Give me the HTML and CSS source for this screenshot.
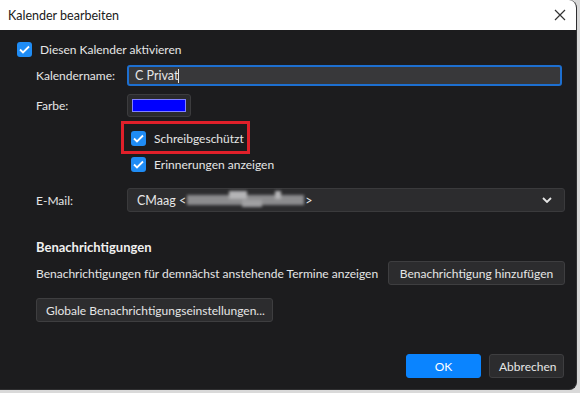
FILE: index.html
```html
<!DOCTYPE html>
<html lang="de">
<head>
  <meta charset="UTF-8">
  <title>Kalender bearbeiten</title>
  <link rel="stylesheet" href="styles.css">
</head>
<body>
  <div class="window">
    <div class="titlebar">
      <span class="title">Kalender bearbeiten</span>
      <svg class="close" width="12" height="12" viewBox="0 0 12 12">
        <path d="M1 1 L11 11 M11 1 L1 11" stroke="#333" stroke-width="1.2" fill="none"/>
      </svg>
    </div>

    <div class="content">
      <label class="check main-check">
        <span class="box"><svg width="11" height="9" viewBox="0 0 11 9"><path d="M1 4.5 L4 7.5 L10 1.5" stroke="#fff" stroke-width="1.8" fill="none"/></svg></span>
        Diesen Kalender aktivieren
      </label>

      <div class="form-row row-name">
        <span class="label">Kalendername:</span>
        <div class="text-input">C Privat<span class="caret"></span></div>
      </div>

      <div class="form-row row-color">
        <span class="label">Farbe:</span>
        <div class="color-btn"><span class="swatch"></span></div>
      </div>

      <div class="checks">
        <div class="highlight">
          <label class="check">
            <span class="box"><svg width="11" height="9" viewBox="0 0 11 9"><path d="M1 4.5 L4 7.5 L10 1.5" stroke="#fff" stroke-width="1.8" fill="none"/></svg></span>
            Schreibgeschützt
          </label>
        </div>
        <label class="check reminder">
          <span class="box"><svg width="11" height="9" viewBox="0 0 11 9"><path d="M1 4.5 L4 7.5 L10 1.5" stroke="#fff" stroke-width="1.8" fill="none"/></svg></span>
          Erinnerungen anzeigen
        </label>
      </div>

      <div class="form-row row-mail">
        <span class="label">E-Mail:</span>
        <div class="select">
          <span class="mail">CMaag &lt;<span class="blur"><i class="b1"></i><i class="b2"></i><i class="b3"></i></span>&gt;</span>
          <svg class="chevron" width="10" height="6" viewBox="0 0 10 6"><path d="M1 1 L5 5 L9 1" stroke="#e6e6e6" stroke-width="1.8" fill="none"/></svg>
        </div>
      </div>

      <h3 class="section">Benachrichtigungen</h3>
      <div class="notify-row">
        <span>Benachrichtigungen für demnächst anstehende Termine anzeigen</span>
        <button class="btn add">Benachrichtigung hinzufügen</button>
      </div>
      <button class="btn global">Globale Benachrichtigungseinstellungen...</button>

      <div class="footer">
        <button class="btn primary">OK</button>
        <button class="btn">Abbrechen</button>
      </div>
    </div>
  </div>
</body>
</html>
```

FILE: styles.css
```css
html, body {
  margin: 0;
  padding: 0;
}
body {
  width: 580px;
  height: 393px;
  background: #d9d9d9;
  font-family: Lato, "Noto Sans", sans-serif;
  font-size: 12px;
  color: #e6e6e6;
  overflow: hidden;
  white-space: nowrap;
}
.window {
  width: 577px;
  height: 390px;
  background: #1c1c1e;
  border-right: 1px solid #2e2e30;
  border-bottom: 1px solid #2e2e30;
  border-radius: 0 8px 8px 0;
  overflow: hidden;
  box-sizing: border-box;
}
.titlebar {
  height: 30px;
  background: #fff;
  color: #1a1a1a;
  display: flex;
  align-items: center;
  justify-content: space-between;
  padding: 0 10px 0 8px;
  font-size: 12.5px;
}
.content {
  padding: 11px 0 0 0;
}
.check {
  display: flex;
  align-items: center;
  gap: 8px;
  height: 16px;
}
.box {
  width: 15px;
  height: 15px;
  border-radius: 3px;
  background: #1f8cf5;
  display: flex;
  align-items: center;
  justify-content: center;
}
.main-check {
  margin-left: 17px;
}
.form-row {
  display: flex;
  align-items: center;
  padding-left: 36px;
}
.label {
  width: 91px;
  flex: none;
}
.row-name {
  margin-top: 8px;
}
.text-input {
  width: 435px;
  height: 21px;
  box-sizing: border-box;
  background: #38383a;
  border: 2px solid #1d6fd0;
  border-radius: 3px;
  padding: 0 6px;
  display: flex;
  align-items: center;
  font-size: 12.5px;
}
.caret {
  width: 1px;
  height: 14px;
  background: #e6e6e6;
}
.row-color {
  margin-top: 8px;
}
.color-btn {
  width: 64px;
  height: 23px;
  box-sizing: border-box;
  background: #2a2a2c;
  border: 1px solid #3c3c3e;
  border-radius: 3px;
  padding: 4px 4px;
}
.swatch {
  display: block;
  height: 13px;
  background: #0000ff;
  border: 1px solid #8080ff;
  box-sizing: border-box;
}
.checks {
  margin-left: 121px;
  margin-top: 4px;
}
.highlight {
  width: 129px;
  height: 33px;
  box-sizing: border-box;
  border: 3px solid #e0202a;
  padding: 6px 0 0 7px;
}
.reminder {
  margin-left: 10px;
  margin-top: 2px;
}
.row-mail {
  margin-top: 16px;
}
.select {
  width: 438px;
  height: 24px;
  box-sizing: border-box;
  background: #2c2c2e;
  border: 1px solid #3a3a3c;
  border-radius: 3px;
  display: flex;
  align-items: center;
  justify-content: space-between;
  padding: 0 12px 0 9px;
  font-size: 12.5px;
}
.mail {
  display: flex;
  align-items: center;
}
.blur {
  display: inline-block;
  position: relative;
  width: 117px;
  height: 10px;
  margin: 0 1px;
  background: #8c8c8e;
  filter: blur(1.5px);
}
.blur i {
  position: absolute;
  background: #b4b4b6;
}
.blur .b1 { left: 42px; top: -4px; width: 18px; height: 8px; }
.blur .b2 { left: 55px; top: 5px; width: 20px; height: 7px; background: #a0a0a2; }
.blur .b3 { left: 88px; top: -4px; width: 6px; height: 8px; }
.section {
  margin: 26px 0 0 36px;
  font-size: 13px;
  font-weight: bold;
  color: #f0f0f0;
  line-height: 18px;
}
.notify-row {
  display: flex;
  align-items: center;
  justify-content: space-between;
  padding: 0 11px 0 36px;
  margin-top: 5px;
}
.btn {
  display: block;
  font-family: inherit;
  font-size: 12px;
  color: #e6e6e6;
  background: #2c2c2e;
  border: 1px solid #3e3e40;
  border-radius: 3px;
  height: 24px;
  padding: 0 9px;
  box-sizing: border-box;
  white-space: nowrap;
}
.add {
  width: 177px;
}
.global {
  margin: 13px 0 0 36px;
  width: 237px;
}
.footer {
  display: flex;
  justify-content: flex-end;
  gap: 8px;
  padding-right: 12px;
  margin-top: 32px;
}
.footer .btn {
  width: 75px;
}
.primary {
  background: #0a84ff;
  border-color: #0a84ff;
  color: #fff;
}
```
